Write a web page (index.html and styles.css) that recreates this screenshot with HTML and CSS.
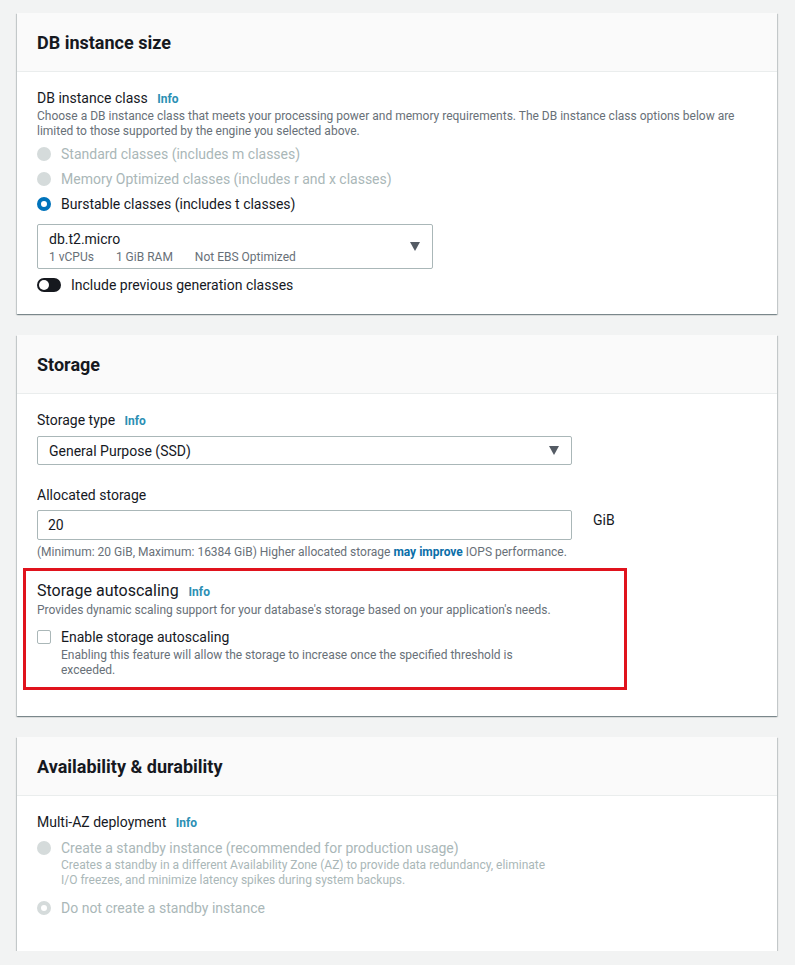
FILE: index.html
```html
<!DOCTYPE html>
<html lang="en">
<head>
    <meta charset="UTF-8">
    <meta name="viewport" content="width=device-width, initial-scale=1.0">
    <title>Create database</title>
    <link rel="stylesheet" href="styles.css">
</head>
<body>
    <div class="page">
        <section class="card card-size">
            <div class="card-header"><h2>DB instance size</h2></div>
            <div class="card-body">
                <div class="field-label">DB instance class <a class="info">Info</a></div>
                <p class="desc">Choose a DB instance class that meets your processing power and memory requirements. The DB instance class options below are limited to those supported by the engine you selected above.</p>
                <div class="radio-list">
                    <label class="radio disabled"><span class="dot"></span>Standard classes (includes m classes)</label>
                    <label class="radio disabled"><span class="dot"></span>Memory Optimized classes (includes r and x classes)</label>
                    <label class="radio"><span class="dot checked"></span>Burstable classes (includes t classes)</label>
                </div>
                <div class="select select-tall">
                    <div>
                        <div class="select-value">db.t2.micro</div>
                        <div class="select-meta"><span>1 vCPUs</span><span>1 GiB RAM</span><span>Not EBS Optimized</span></div>
                    </div>
                    <span class="caret"></span>
                </div>
                <label class="toggle-row"><span class="toggle"></span>Include previous generation classes</label>
            </div>
        </section>

        <section class="card card-storage">
            <div class="card-header"><h2>Storage</h2></div>
            <div class="card-body">
                <div class="field-label">Storage type <a class="info">Info</a></div>
                <div class="select select-wide">
                    <div class="select-value">General Purpose (SSD)</div>
                    <span class="caret"></span>
                </div>

                <div class="field-label spaced">Allocated storage</div>
                <div class="input-row">
                    <div class="input">20</div>
                    <span class="unit">GiB</span>
                </div>
                <p class="hint">(Minimum: 20 GiB, Maximum: 16384 GiB) Higher allocated storage <a class="link">may improve</a> IOPS performance.</p>

                <div class="highlight">
                    <div class="sub-title">Storage autoscaling <a class="info">Info</a></div>
                    <p class="desc">Provides dynamic scaling support for your database's storage based on your application's needs.</p>
                    <label class="check-row">
                        <span class="checkbox"></span>
                        <span>
                            <span class="check-label">Enable storage autoscaling</span>
                            <span class="check-desc">Enabling this feature will allow the storage to increase once the specified threshold is exceeded.</span>
                        </span>
                    </label>
                </div>
            </div>
        </section>

        <section class="card card-avail">
            <div class="card-header"><h2>Availability &amp; durability</h2></div>
            <div class="card-body">
                <div class="field-label">Multi-AZ deployment <a class="info">Info</a></div>
                <div class="radio-list">
                    <label class="radio disabled top">
                        <span class="dot"></span>
                        <span>
                            <span class="radio-text">Create a standby instance (recommended for production usage)</span>
                            <span class="radio-desc">Creates a standby in a different Availability Zone (AZ) to provide data redundancy, eliminate I/O freezes, and minimize latency spikes during system backups.</span>
                        </span>
                    </label>
                    <label class="radio disabled"><span class="dot ring"></span>Do not create a standby instance</label>
                </div>
            </div>
        </section>
    </div>
</body>
</html>
```

FILE: styles.css
```css
body {
    margin: 0;
    background-color: #f2f3f3;
    font-family: Roboto, "Liberation Sans", sans-serif;
    color: #16191f;
    font-size: 14px;
}
.page {
    padding: 13px 18px 0 17px;
    display: flex;
    flex-direction: column;
    gap: 21px;
}
.card {
    background-color: #fff;
    box-shadow: 0 1px 1px 0 rgba(0, 28, 36, .3), 1px 1px 1px 0 rgba(0, 28, 36, .15), -1px 1px 1px 0 rgba(0, 28, 36, .15);
}
.card-header {
    background-color: #fafafa;
    border-bottom: 1px solid #eaeded;
    height: 58px;
    padding: 0 20px;
    display: flex;
    align-items: center;
}
.card-header h2 {
    margin: 0;
    font-size: 18px;
    font-weight: 700;
}
.card-body {
    padding: 15px 20px 20px;
}
.card-size .card-body { padding-top: 16px; padding-bottom: 19px; }
.card-storage .card-body { padding-top: 16px; padding-bottom: 26px; }
.card-avail .card-body { padding-top: 16px; padding-bottom: 31px; }

.field-label {
    line-height: 20px;
}
.field-label.spaced {
    margin-top: 20px;
}
.info {
    color: #2b8fb4;
    font-size: 12px;
    font-weight: 700;
    margin-left: 6px;
}
.desc {
    margin: 0;
    font-size: 12px;
    line-height: 15px;
    color: #687078;
}
.radio-list {
    display: flex;
    flex-direction: column;
    margin-top: 2px;
}
.radio {
    display: flex;
    align-items: center;
    height: 25px;
}
.radio.top {
    align-items: flex-start;
    height: auto;
    padding: 3px 0 7px;
}
.radio.top .dot {
    margin-top: 3px;
}
.radio.disabled {
    color: #aab7b8;
}
.dot {
    width: 14px;
    height: 14px;
    border-radius: 50%;
    background-color: #d5dbdb;
    margin-right: 10px;
    flex-shrink: 0;
    box-sizing: border-box;
}
.dot.checked {
    background-color: #fff;
    border: 4px solid #0073bb;
}
.dot.ring {
    background-color: #fff;
    border: 4px solid #d5dbdb;
}
.radio-text {
    display: block;
    line-height: 20px;
}
.radio-desc {
    display: block;
    font-size: 12px;
    line-height: 15px;
    width: 490px;
}

.select {
    border: 1px solid #aab7b8;
    border-radius: 2px;
    display: flex;
    align-items: center;
    justify-content: space-between;
    padding: 0 12px 0 11px;
    box-sizing: border-box;
}
.select-tall {
    width: 396px;
    height: 45px;
    margin-top: 8px;
}
.select-tall .select-value {
    line-height: 20px;
}
.select-wide {
    width: 535px;
    height: 29px;
    margin-top: 5px;
}
.select-value {
    line-height: 18px;
}
.select-meta {
    margin-top: 1px;
    font-size: 12px;
    color: #687078;
    line-height: 15px;
    display: flex;
    gap: 22px;
}
.caret {
    width: 0;
    height: 0;
    border-left: 5px solid transparent;
    border-right: 5px solid transparent;
    border-top: 9px solid #545b64;
}
.toggle-row {
    display: flex;
    align-items: center;
    gap: 10px;
    margin-top: 6px;
    line-height: 20px;
}
.toggle {
    width: 24px;
    height: 14px;
    border-radius: 7px;
    background-color: #16191f;
    position: relative;
}
.toggle::after {
    content: "";
    position: absolute;
    left: 2px;
    top: 2px;
    width: 10px;
    height: 10px;
    border-radius: 50%;
    background-color: #fff;
}

.input-row {
    display: flex;
    align-items: flex-start;
    margin-top: 5px;
}
.input {
    width: 535px;
    height: 30px;
    border: 1px solid #aab7b8;
    border-radius: 2px;
    box-sizing: border-box;
    padding: 0 10px;
    display: flex;
    align-items: center;
}
.unit {
    margin-left: 21px;
    margin-top: 2px;
}
.hint {
    margin: 5px 0 0;
    font-size: 12px;
    line-height: 15px;
    color: #687078;
}
.link {
    color: #0a6ea8;
    font-weight: 700;
}

.highlight {
    margin: 8px 0 0 -14px;
    width: 604px;
    box-sizing: border-box;
    border: 3px solid #e0131d;
    padding: 9px 11px 9px;
}
.sub-title {
    font-size: 16px;
    line-height: 22px;
}
.check-row {
    display: flex;
    align-items: flex-start;
    gap: 10px;
    margin-top: 9px;
}
.checkbox {
    width: 14px;
    height: 14px;
    border: 1px solid #aab7b8;
    border-radius: 2px;
    box-sizing: border-box;
    margin-top: 3px;
    flex-shrink: 0;
}
.check-label {
    display: block;
    line-height: 20px;
}
.check-desc {
    display: block;
    margin-top: 1px;
    font-size: 12px;
    line-height: 15px;
    color: #687078;
    width: 480px;
}
```
